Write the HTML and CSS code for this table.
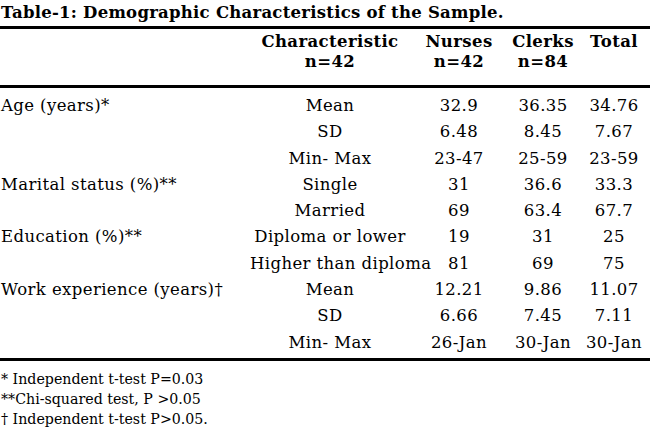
FILE: index.html
```html
<!DOCTYPE html>
<html lang="en">
<head>
<meta charset="utf-8">
<title>Table-1: Demographic Characteristics of the Sample</title>
<link rel="stylesheet" href="styles.css">
</head>
<body>
<div class="page">
  <div class="caption">Table-1: Demographic Characteristics of the Sample.</div>
  <table class="data">
    <colgroup>
      <col class="c-label">
      <col class="c-char">
      <col class="c-nurses">
      <col class="c-clerks">
      <col class="c-total">
    </colgroup>
    <thead>
      <tr class="h1">
        <th></th>
        <th>Characteristic</th>
        <th>Nurses</th>
        <th>Clerks</th>
        <th>Total</th>
      </tr>
      <tr class="h2">
        <th></th>
        <th>n=42</th>
        <th>n=42</th>
        <th>n=84</th>
        <th></th>
      </tr>
    </thead>
    <tbody>
      <tr><td class="lbl">Age (years)*</td><td>Mean</td><td>32.9</td><td>36.35</td><td>34.76</td></tr>
      <tr><td class="lbl"></td><td>SD</td><td>6.48</td><td>8.45</td><td>7.67</td></tr>
      <tr><td class="lbl"></td><td>Min- Max</td><td>23-47</td><td>25-59</td><td>23-59</td></tr>
      <tr><td class="lbl">Marital status (%)**</td><td>Single</td><td>31</td><td>36.6</td><td>33.3</td></tr>
      <tr><td class="lbl"></td><td>Married</td><td>69</td><td>63.4</td><td>67.7</td></tr>
      <tr><td class="lbl">Education (%)**</td><td>Diploma or lower</td><td>19</td><td>31</td><td>25</td></tr>
      <tr><td class="lbl"></td><td>Higher than diploma</td><td>81</td><td>69</td><td>75</td></tr>
      <tr><td class="lbl">Work experience (years)†</td><td>Mean</td><td>12.21</td><td>9.86</td><td>11.07</td></tr>
      <tr><td class="lbl"></td><td>SD</td><td>6.66</td><td>7.45</td><td>7.11</td></tr>
      <tr><td class="lbl"></td><td>Min- Max</td><td>26-Jan</td><td>30-Jan</td><td>30-Jan</td></tr>
    </tbody>
  </table>
  <div class="notes">
    <p>* Independent t-test P=0.03</p>
    <p>**Chi-squared test, P &gt;0.05</p>
    <p>† Independent t-test P&gt;0.05.</p>
  </div>
</div>
</body>
</html>
```

FILE: styles.css
```css
html, body {
  margin: 0;
  padding: 0;
  background: #ffffff;
}

.page {
  width: 650px;
  height: 437px;
  overflow: hidden;
  font-family: "DejaVu Serif", "Liberation Serif", serif;
  color: #000;
}

.caption {
  font-weight: bold;
  font-size: 16.5px;
  letter-spacing: 0.25px;
  line-height: 26px;
  height: 26px;
  padding-left: 1px;
  white-space: nowrap;
}

.data {
  width: 650px;
  border-collapse: collapse;
  table-layout: fixed;
  font-size: 16.5px;
  letter-spacing: 0.4px;
}

.c-label { width: 250px; }
.c-char { width: 160px; }
.c-nurses { width: 98px; }
.c-clerks { width: 70px; }
.c-total { width: 72px; }

.data th,
.data td {
  padding: 0;
  text-align: center;
  white-space: nowrap;
  overflow: visible;
}

.data th {
  font-weight: bold;
  line-height: 20px;
}

.data .h1 th {
  border-top: 3px solid #000;
  padding-top: 3px;
}

.data .h2 th {
  border-bottom: 3px solid #000;
  padding-bottom: 13px;
}

.data td {
  line-height: 26.3px;
}

.data td.lbl {
  text-align: left;
  padding-left: 1px;
}

.data tbody tr:first-child td {
  padding-top: 5px;
}

.data tbody tr:last-child td {
  border-bottom: 3px solid #000;
  padding-bottom: 2px;
}

.notes {
  margin-top: 8px;
  font-size: 14.2px;
  line-height: 20px;
  padding-left: 1px;
}

.notes p {
  margin: 0;
  white-space: nowrap;
}
```
